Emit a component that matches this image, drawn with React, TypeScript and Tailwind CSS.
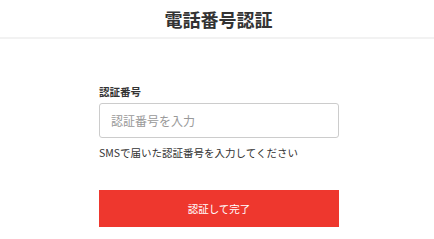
export default function App() {
  return (
    <div className="min-h-screen bg-white font-['Noto_Sans_CJK_JP','Noto_Sans',sans-serif] text-[#333]">
      <header className="flex h-[39px] items-center justify-center border-b-2 border-[#f2f2f2] pl-[3px]">
        <h1 className="text-[18px] font-bold leading-none">電話番号認証</h1>
      </header>

      <div className="flex justify-center pl-[4px] pt-[45px]">
        <div className="w-[240px]">
          <label className="block text-[10.5px] font-bold leading-[16px] text-[#333]">認証番号</label>
          <input
            type="text"
            placeholder="認証番号を入力"
            className="mt-[3px] block h-[35px] w-full rounded-[3px] border border-[#cccccc] px-[11px] text-[12px] text-[#333] outline-none placeholder:text-[#999]"
          />
          <p className="mt-[7px] text-[10.5px] leading-[16px] text-[#333]">SMSで届いた認証番号を入力してください</p>
          <button
            type="button"
            className="mt-[29px] flex h-[37px] w-full items-center justify-center bg-[#ee372e] text-[10.5px] text-white"
          >
            認証して完了
          </button>
        </div>
      </div>
    </div>
  );
}
